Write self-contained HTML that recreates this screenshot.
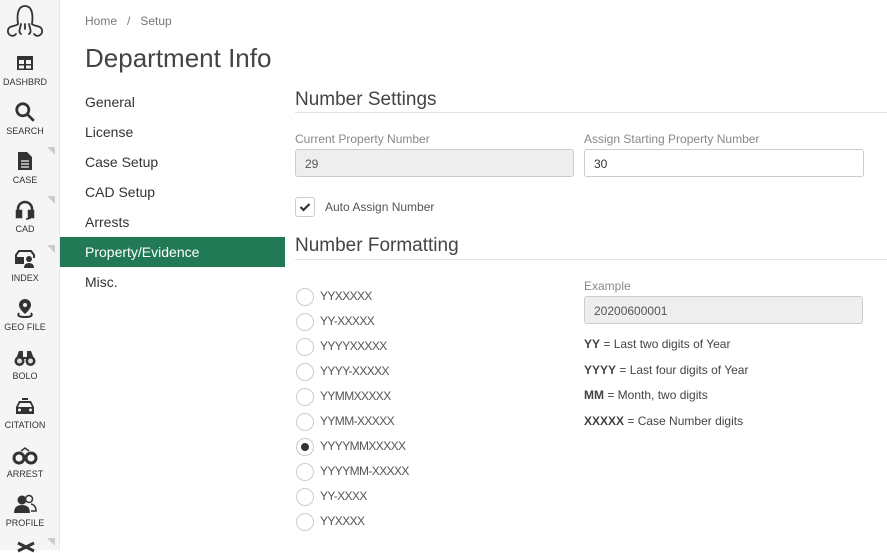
<!DOCTYPE html>
<html><head><style>
*{box-sizing:border-box;margin:0;padding:0}
body{width:887px;height:550px;overflow:hidden;background:#fff;font-family:"Liberation Sans",sans-serif;color:#333;position:relative}
.sb{position:absolute;left:0;top:0;width:60px;height:550px;background:#f5f5f5;border-right:1px solid #e6e6e6}
.it{position:absolute;left:0;width:50px;text-align:center;font-size:9px;line-height:11px;color:#333}
.it .ic{height:20px;margin-bottom:4px;display:flex;align-items:center;justify-content:center}
.tri{position:absolute;left:47px;width:0;height:0;border-left:8px solid transparent;border-top:8px solid #ccc}
.t{position:absolute;white-space:nowrap}
.nav{position:absolute;left:85px;font-size:14px;color:#333}
h2{position:absolute;font-weight:normal;font-size:19px;color:#444}
.hr{position:absolute;height:1px;background:#e2e2e2;left:295px;right:0}
.lbl{position:absolute;font-size:12px;color:#888}
.inp{position:absolute;height:28px;border:1px solid #ccc;border-radius:3px;font-size:12px;padding:7px 9px;color:#555}
.ro{background:#eee}
.rad{position:absolute;left:296px;width:18px;height:18px;border:1px solid #ccc;border-radius:50%;background:#fff}
.rt{position:absolute;left:320px;font-size:12px;color:#555;letter-spacing:-0.6px}
.ex{position:absolute;left:584px;font-size:12px;color:#444}
</style></head><body>
<div class="sb">
<svg style="position:absolute;left:5px;top:3px" width="40" height="36" viewBox="0 0 40 36" fill="none" stroke="#333" stroke-width="1.8" stroke-linecap="round"><path d="M13 21 C12 14 12 3 20 3 C28 3 28 14 27 21"/><path d="M13 21 C10 24 4 22 3 27 C2 32 8 35 11 31"/><path d="M27 21 C30 24 36 22 37 27 C38 32 32 35 29 31"/><path d="M16 21 C15 26 13 29 16 31"/><path d="M24 21 C25 26 27 29 24 31"/><path d="M20 21 V26"/></svg>
<div class="it" style="top:53px"><div class="ic"><svg width="18" height="16" viewBox="0 0 18 16"><rect x="1" y="1" width="16" height="14" fill="#333"/><rect x="3" y="5" width="5" height="4" fill="#f5f5f5"/><rect x="10" y="5" width="5" height="4" fill="#f5f5f5"/><rect x="3" y="10.5" width="5" height="3" fill="#f5f5f5"/><rect x="10" y="10.5" width="5" height="3" fill="#f5f5f5"/></svg></div>DASHBRD</div>
<div class="it" style="top:102px"><div class="ic"><svg width="22" height="22" viewBox="0 0 20 20" fill="none" stroke="#333" stroke-width="2.5"><circle cx="8" cy="8" r="5.5"/><path d="M12 12 L18 18"/></svg></div>SEARCH</div>
<div class="it" style="top:151px"><div class="ic"><svg width="16" height="20" viewBox="0 0 16 20"><path d="M1 1 H10 L15 6 V19 H1Z" fill="#333"/><path d="M4 10H12M4 13H12M4 16H12" stroke="#f5f5f5" stroke-width="1.3"/></svg></div>CASE</div>
<div class="tri" style="top:147px"></div>
<div class="it" style="top:200px"><div class="ic"><svg width="20" height="20" viewBox="0 0 20 20" fill="none" stroke="#333" stroke-width="2.5"><path d="M3 13 V9 a7 7 0 0 1 14 0 V13"/><rect x="2" y="11" width="4" height="6" fill="#333"/><rect x="14" y="11" width="4" height="6" fill="#333"/><path d="M16 17 Q15 19 11 19" stroke-width="1.5"/></svg></div>CAD</div>
<div class="tri" style="top:196px"></div>
<div class="it" style="top:249px"><div class="ic"><svg width="24" height="20" viewBox="0 0 24 20"><path d="M3 14 V6 L6 2 H18 L21 6 V9" fill="none" stroke="#333" stroke-width="2"/><rect x="2" y="8" width="9" height="7" fill="#333"/><circle cx="16" cy="10" r="3" fill="#333"/><path d="M11 19 Q11 14 16 14 Q21 14 21 19Z" fill="#333"/></svg></div>INDEX</div>
<div class="tri" style="top:245px"></div>
<div class="it" style="top:298px"><div class="ic"><svg width="20" height="21" viewBox="0 0 20 21"><path d="M10 1 a6 6 0 0 1 6 6 C16 11 10 16 10 16 C10 16 4 11 4 7 a6 6 0 0 1 6-6Z" fill="#333"/><circle cx="10" cy="7" r="2" fill="#f5f5f5"/><path d="M4 15 Q1 19 10 19 Q19 19 16 15" fill="none" stroke="#333" stroke-width="2"/></svg></div>GEO FILE</div>
<div class="it" style="top:347px"><div class="ic"><svg width="24" height="19" viewBox="0 0 24 19"><path d="M3 11 L6 3 H10 V9 H14 V3 H18 L21 11" fill="#333"/><circle cx="6.5" cy="13" r="5" fill="#333"/><circle cx="17.5" cy="13" r="5" fill="#333"/><circle cx="6.5" cy="13" r="2.5" fill="#ddd"/><circle cx="17.5" cy="13" r="2.5" fill="#ddd"/></svg></div>BOLO</div>
<div class="it" style="top:396px"><div class="ic"><svg width="22" height="19" viewBox="0 0 22 19"><rect x="8" y="1" width="6" height="2" fill="#333"/><path d="M5 4 H17 L20 10 V17 H2 V10Z" fill="#333"/><path d="M6 6 H16 L18 10 H4Z" fill="#f5f5f5"/><circle cx="5.5" cy="13" r="1.5" fill="#f5f5f5"/><circle cx="16.5" cy="13" r="1.5" fill="#f5f5f5"/></svg></div>CITATION</div>
<div class="it" style="top:445px"><div class="ic"><svg width="26" height="20" viewBox="0 0 26 20" fill="none" stroke="#333" stroke-width="3"><circle cx="7" cy="13" r="5"/><circle cx="19" cy="13" r="5"/><path d="M9 6 L13 3 L17 6" stroke-width="1.5"/></svg></div>ARREST</div>
<div class="it" style="top:494px"><div class="ic"><svg width="24" height="20" viewBox="0 0 24 20"><circle cx="9" cy="6" r="4.5" fill="#333"/><path d="M1 19 Q1 11 9 11 Q17 11 17 19Z" fill="#333"/><circle cx="16" cy="5" r="3.5" fill="none" stroke="#333" stroke-width="1.5"/><path d="M18 10 Q23 11 23 17 H18" fill="none" stroke="#333" stroke-width="1.5"/></svg></div>PROFILE</div>
<svg style="position:absolute;left:15px;top:541px" width="22" height="12" viewBox="0 0 22 12"><path d="M3 2 L19 10 M19 2 L3 10" stroke="#333" stroke-width="3"/></svg>
<div class="tri" style="top:538px"></div>
</div>

<div class="t" style="left:85px;top:14px;font-size:12px;color:#777">Home &nbsp;&nbsp;/&nbsp;&nbsp; Setup</div>
<div class="t" style="left:85px;top:43px;font-size:26px;color:#444">Department Info</div>

<div class="nav" style="top:94px">General</div>
<div class="nav" style="top:124px">License</div>
<div class="nav" style="top:154px">Case Setup</div>
<div class="nav" style="top:184px">CAD Setup</div>
<div class="nav" style="top:214px">Arrests</div>
<div style="position:absolute;left:60px;top:237px;width:225px;height:30px;background:#217a55"></div>
<div class="nav" style="top:244px;color:#fff">Property/Evidence</div>
<div class="nav" style="top:274px">Misc.</div>

<h2 style="left:295px;top:89px">Number Settings</h2>
<div class="hr" style="top:112px"></div>
<div class="lbl" style="left:295px;top:132px">Current Property Number</div>
<div class="inp ro" style="left:295px;top:149px;width:279px">29</div>
<div class="lbl" style="left:584px;top:132px">Assign Starting Property Number</div>
<div class="inp" style="left:584px;top:149px;width:280px;color:#333">30</div>
<div style="position:absolute;left:295px;top:197px;width:20px;height:20px;border:1px solid #ccc;border-radius:3px"></div>
<svg style="position:absolute;left:299px;top:202px" width="12" height="10" viewBox="0 0 12 10"><path d="M1.5 5 L4.5 8 L10.5 2" fill="none" stroke="#333" stroke-width="2.2"/></svg>
<div class="t" style="left:325px;top:200px;font-size:12px;color:#555">Auto Assign Number</div>

<h2 style="left:295px;top:235px">Number Formatting</h2>
<div class="hr" style="top:259px"></div>

<div class="rad" style="top:288px"></div><div class="rt" style="top:289px">YYXXXXX</div>
<div class="rad" style="top:313px"></div><div class="rt" style="top:314px">YY-XXXXX</div>
<div class="rad" style="top:338px"></div><div class="rt" style="top:339px">YYYYXXXXX</div>
<div class="rad" style="top:363px"></div><div class="rt" style="top:364px">YYYY-XXXXX</div>
<div class="rad" style="top:388px"></div><div class="rt" style="top:389px">YYMMXXXXX</div>
<div class="rad" style="top:413px"></div><div class="rt" style="top:414px">YYMM-XXXXX</div>
<div class="rad" style="top:438px"></div><div style="position:absolute;left:301px;top:443px;width:8px;height:8px;border-radius:50%;background:#333"></div><div class="rt" style="top:439px">YYYYMMXXXXX</div>
<div class="rad" style="top:463px"></div><div class="rt" style="top:464px">YYYYMM-XXXXX</div>
<div class="rad" style="top:488px"></div><div class="rt" style="top:489px">YY-XXXX</div>
<div class="rad" style="top:513px"></div><div class="rt" style="top:514px">YYXXXX</div>

<div class="lbl" style="left:584px;top:279px">Example</div>
<div class="inp ro" style="left:584px;top:296px;width:279px">20200600001</div>
<div class="ex" style="top:337px"><b>YY</b> = Last two digits of Year</div>
<div class="ex" style="top:363px"><b>YYYY</b> = Last four digits of Year</div>
<div class="ex" style="top:388px"><b>MM</b> = Month, two digits</div>
<div class="ex" style="top:414px"><b>XXXXX</b> = Case Number digits</div>
</body></html>
